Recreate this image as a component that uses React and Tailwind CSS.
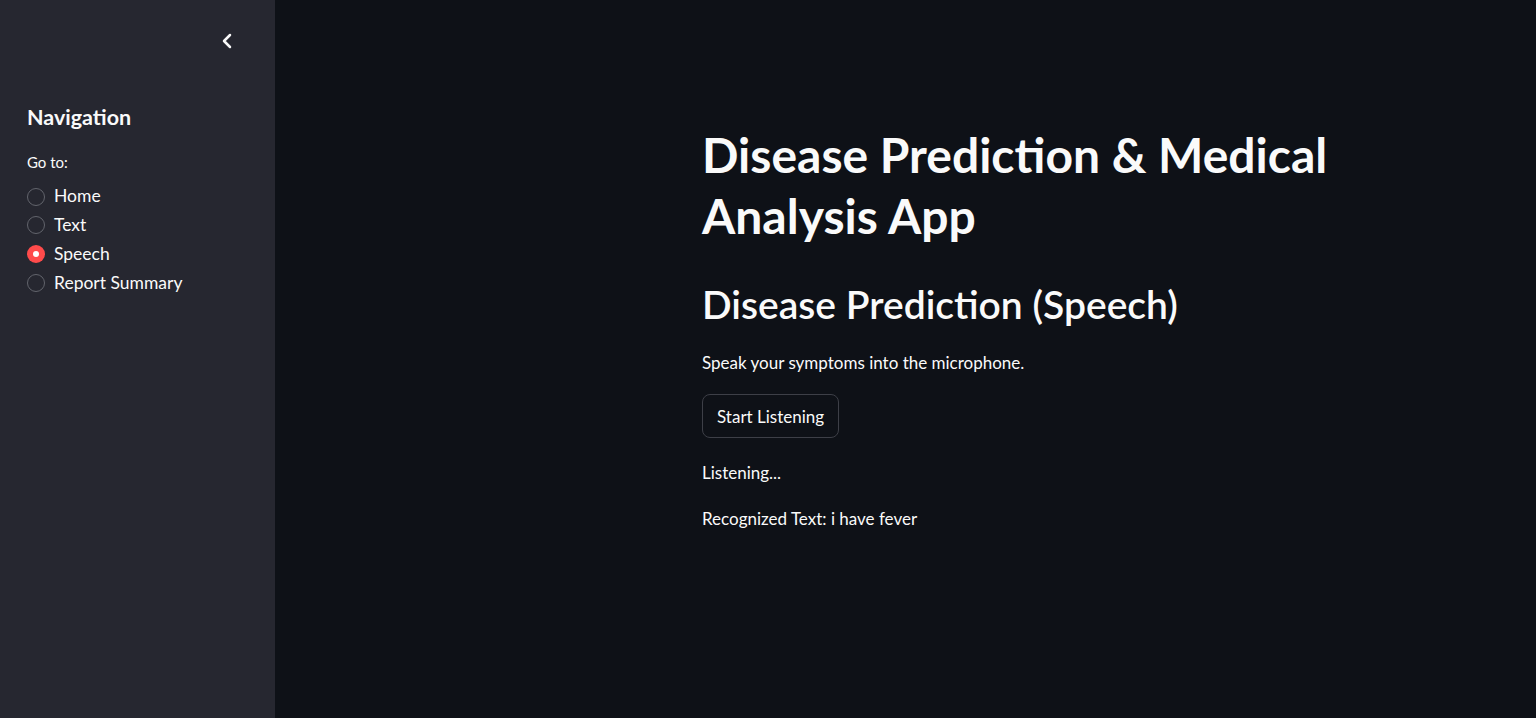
import { ChevronLeft } from "lucide-react";

const font = { fontFamily: "Lato, 'Noto Sans', sans-serif" };

const options = ["Home", "Text", "Speech", "Report Summary"];

function Radio({ label, checked }) {
  return (
    <label className="flex h-[28.7px] items-center gap-[9px]">
      {checked ? (
        <span className="flex h-[18px] w-[18px] items-center justify-center rounded-full bg-[#ff4b4b]">
          <span className="h-[6px] w-[6px] rounded-full bg-white" />
        </span>
      ) : (
        <span className="h-[18px] w-[18px] rounded-full border border-[#62646c]" />
      )}
      <span className="text-[17.5px] text-[#fafafa]">{label}</span>
    </label>
  );
}

export default function App() {
  return (
    <div className="flex h-[718px] w-full overflow-hidden" style={font}>
      <aside className="flex w-[275px] shrink-0 flex-col bg-[#262730] px-[27px]">
        <div className="flex h-[82px] items-center justify-end pr-[9px]">
          <ChevronLeft size={24} strokeWidth={2.5} className="text-[#fafafa]" />
        </div>
        <h2 className="mt-[19px] text-[21.5px] font-bold text-[#fafafa]">Navigation</h2>
        <p className="mt-[18px] text-[15px] text-[#fafafa]">Go to:</p>
        <div className="mt-[8.5px] flex flex-col">
          {options.map((o) => (
            <Radio key={o} label={o} checked={o === "Speech"} />
          ))}
        </div>
      </aside>

      <main className="flex-1 bg-[#0e1117] pl-[427px] pt-[124px]">
        <div className="w-[704px] text-[#fafafa]">
          <h1 className="text-[48px] font-bold leading-[61px]">
            Disease Prediction &amp; Medical Analysis App
          </h1>
          <h2 className="mt-[35px] text-[39px] font-semibold leading-[1.2]">
            Disease Prediction (Speech)
          </h2>
          <p className="mt-[22px] text-[17px]">Speak your symptoms into the microphone.</p>
          <button className="mt-[19px] h-[44px] rounded-[8px] border border-[#3d3f47] bg-[#0e1117] px-[14px] text-[17px] text-[#fafafa]">
            Start Listening
          </button>
          <p className="mt-[22px] text-[17px]">Listening...</p>
          <p className="mt-[20px] text-[17px]">Recognized Text: i have fever</p>
        </div>
      </main>
    </div>
  );
}
